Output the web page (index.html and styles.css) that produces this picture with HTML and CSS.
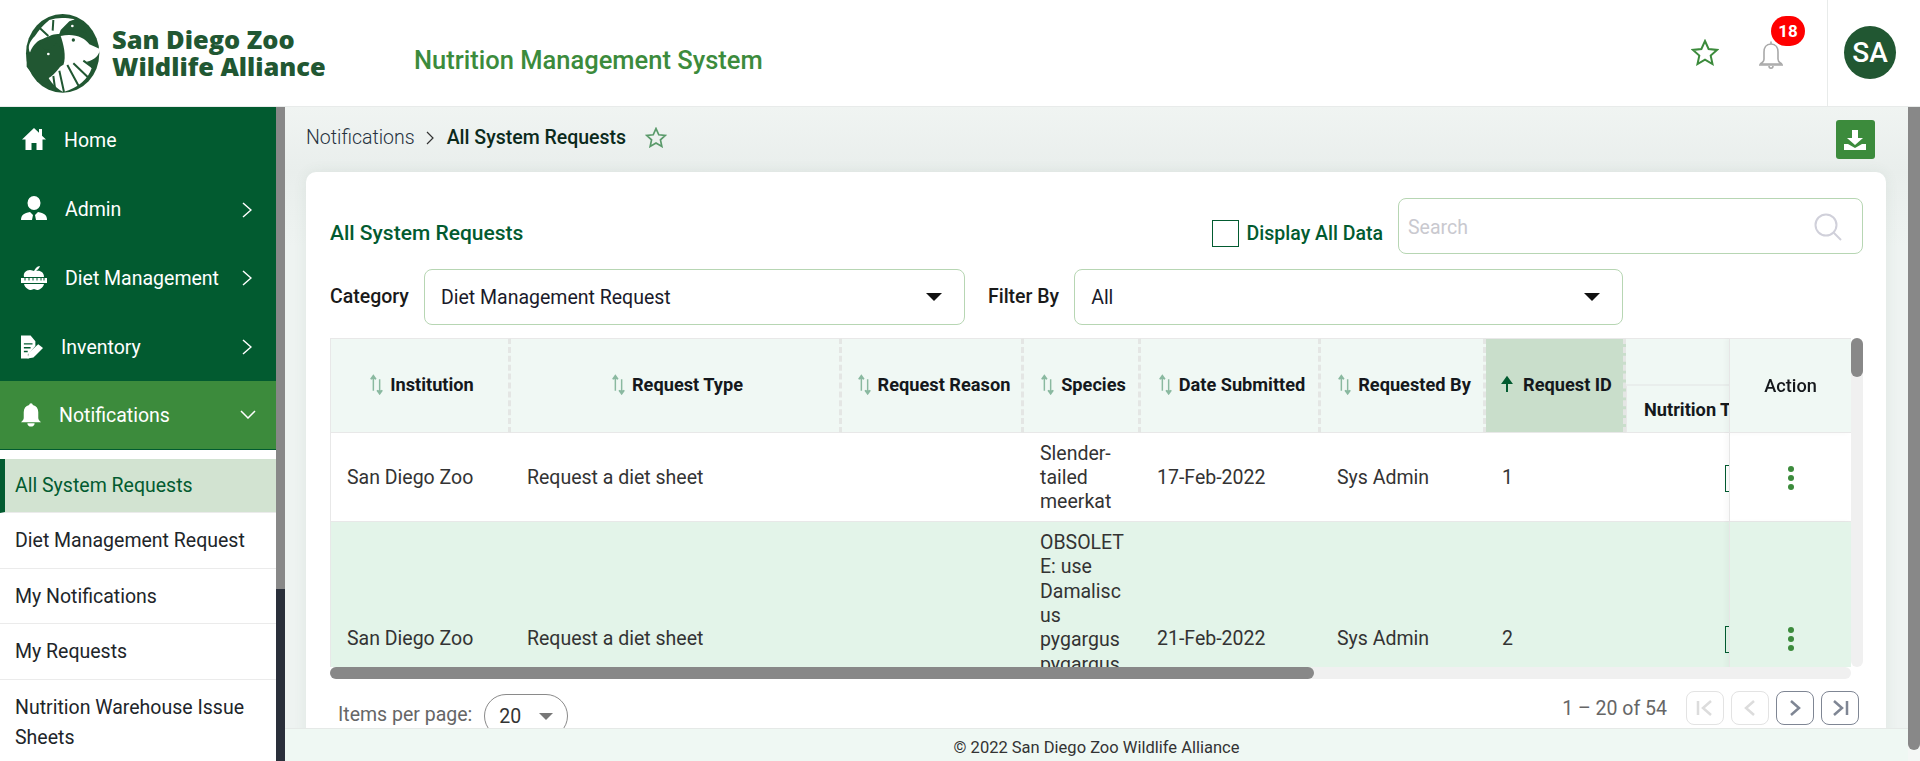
FILE: index.html
```html
<!DOCTYPE html>
<html lang="en">
<head>
<meta charset="utf-8">
<title>All System Requests</title>
<link rel="stylesheet" href="styles.css">
</head>
<body>
<header class="topbar">
  <div class="logo">
    <svg class="logo-mark" viewBox="0 0 270 258" aria-hidden="true">
      <ellipse cx="128" cy="130" rx="110" ry="118" fill="#215732"/>
      <path fill="#fff" d="M88 30C110 22 135 22 165 28 145 40 130 55 118 72 100 70 85 80 60 90 50 95 35 110 30 128 22 110 28 95 45 78 55 62 70 45 88 30Z"/>
      <path fill="#215732" d="M165 28 148 34 122 60 118 72 150 60 175 58 200 72 190 45Z"/>
      <path fill="#fff" d="M122 78C160 68 195 82 208 103L240 117C238 135 225 150 200 155L215 175C205 205 175 235 130 246 105 235 80 205 75 175L130 165C140 140 130 100 122 78Z"/>
      <path fill="#215732" d="M20 130 50 122 58 98 72 118 88 118 110 98C125 115 140 140 128 165 115 172 110 190 85 205L50 210 20 170Z"/>
      <path fill="none" stroke="#215732" stroke-width="6" d="M142 165 178 232M118 182 132 246M100 198 106 242M160 160 207 205M190 152 226 178M60 55 85 78M100 30 98 62"/>
      <circle cx="160" cy="90" r="5" fill="#215732"/>
      <circle cx="157" cy="48" r="4" fill="#fff"/>
      <circle cx="85" cy="132" r="4" fill="#fff"/>
    </svg>
    <div class="logo-text">San Diego Zoo<br>Wildlife Alliance</div>
  </div>
  <div class="app-title">Nutrition Management System</div>
  <div class="top-actions">
    <svg class="top-star" viewBox="0 0 28 27" aria-hidden="true"><path d="M14 2l3.6 8 8.4.9-6.3 5.7 1.8 8.4-7.5-4.4L6.500 25l1.800-8.400L2 10.900l8.400-.9z"/></svg>
    <div class="bell-wrap">
      <svg class="top-bell" viewBox="0 0 26 30" aria-hidden="true"><path d="M13 4V1.500M13 4C8 4 6 8 6 12v7c0 2-2 4-4 5h22c-2-1-4-3-4-5v-7c0-4-2-8-7-8z"/><path d="M1 25h24M11 26c0 3 4 3 4 0"/></svg>
      <span class="badge">18</span>
    </div>
    <div class="user-cell"><div class="avatar">SA</div></div>
  </div>
</header>

<div class="shell">
  <nav class="sidebar">
    <div class="nav-list">
      <a class="nav-item nav-home">
        <svg class="nav-icon" viewBox="0 0 26 24" aria-hidden="true"><path d="M13 1 1 12.500h3.500V23h6v-7h5v7h6V12.500H25l-4-3.800V2h-3v3.800z"/></svg>
        <span>Home</span>
      </a>
      <a class="nav-item nav-admin">
        <svg class="nav-icon" viewBox="0 0 26 24" aria-hidden="true"><ellipse cx="13" cy="7" rx="6.500" ry="7"/><path d="M0 24c0-5 3-7 9-8l3 3-1 5zM26 24c0-5-3-7-9-8l-3 3 1 5z"/></svg>
        <span>Admin</span>
        <svg class="nav-chev" viewBox="0 0 10 16" aria-hidden="true"><path d="M1 1l8 7-8 7"/></svg>
      </a>
      <a class="nav-item nav-diet">
        <svg class="nav-icon" viewBox="0 0 26 24" aria-hidden="true"><path d="M3 11c-1-4 2-7 6-7 2 0 3 1 4 1 1-2 3-5 6-5-1 3-3 4-4 5 4-1 8 1 8 6zM0 12h26v5H0zM3 18h20c-1 4-5 6-7 6-1 0-2-1-3-1s-2 1-3 1c-2 0-6-2-7-6z"/><path class="tape-ticks" d="M4 12v2.500M8 12v2.500M12 12v2.500M16 12v2.500M20 12v2.500M23 12v2.500"/></svg>
        <span>Diet Management</span>
        <svg class="nav-chev" viewBox="0 0 10 16" aria-hidden="true"><path d="M1 1l8 7-8 7"/></svg>
      </a>
      <a class="nav-item nav-inv">
        <svg class="nav-icon" viewBox="0 0 24 24" aria-hidden="true"><path d="M0 0h10l5 6v5l-8 9 1 4H0zM3 8v1.500h9V8zM3 12v1.500h7V12zM3 16v1.500h4V16z"/><path d="M18 9l5 4-10 10-6 1 1-6z"/></svg>
        <span>Inventory</span>
        <svg class="nav-chev" viewBox="0 0 10 16" aria-hidden="true"><path d="M1 1l8 7-8 7"/></svg>
      </a>
      <a class="nav-item nav-open">
        <svg class="nav-icon" viewBox="0 0 22 26" aria-hidden="true"><path d="M11 0c1 0 2 1 2 2 4 1 6 4 6 8v6c0 2 1 3 3 5H0c2-2 3-3 3-5v-6c0-4 2-7 6-8 0-1 1-2 2-2zM7 22h8c0 5-8 5-8 0z"/></svg>
        <span>Notifications</span>
        <svg class="nav-chev-down" viewBox="0 0 16 9" aria-hidden="true"><path d="M1 1l7 7 7-7"/></svg>
      </a>
      <div class="sub-list">
        <a class="sub-item sub-active">All System Requests</a>
        <a class="sub-item">Diet Management Request</a>
        <a class="sub-item">My Notifications</a>
        <a class="sub-item">My Requests</a>
        <a class="sub-item sub-wrap">Nutrition Warehouse Issue Sheets</a>
      </div>
    </div>
    <div class="rail-side"><div class="thumb-side"></div></div>
  </nav>

  <main class="main">
    <div class="main-content">
      <div class="crumbs">
        <span class="crumb-parent">Notifications</span>
        <svg class="crumb-sep" viewBox="0 0 9 14" aria-hidden="true"><path d="M1 1l6 6-6 6"/></svg>
        <span class="crumb-current">All System Requests</span>
        <svg class="crumb-star" viewBox="0 0 28 27" aria-hidden="true"><path d="M14 2l3.6 8 8.4.9-6.3 5.7 1.8 8.4-7.500-4.400L6.500 25l1.800-8.400L2 10.900l8.400-.9z"/></svg>
        <button class="download" aria-label="Download">
          <svg viewBox="0 0 22 22" aria-hidden="true"><path d="M8 1h6v8h5l-8 7-8-7h5z"/><path d="M0 15h4l7 4 7-4h4v6H0z"/></svg>
        </button>
      </div>

      <section class="card">
        <div class="card-head">
          <h1 class="card-title">All System Requests</h1>
          <label class="check"><span class="check-box"></span>Display All Data</label>
          <div class="search">
            <span class="search-ph">Search</span>
            <svg class="search-icon" viewBox="0 0 28 28" aria-hidden="true"><circle cx="12" cy="12" r="10.500"/><path d="M19.500 19.500 27 27"/></svg>
          </div>
        </div>
        <div class="filters">
          <span class="filter-label">Category</span>
          <div class="select select-cat"><span>Diet Management Request</span><i class="caret"></i></div>
          <span class="filter-label filter-second">Filter By</span>
          <div class="select select-by"><span>All</span><i class="caret"></i></div>
        </div>

        <div class="grid-wrap">
          <div class="grid-view">
            <table class="grid">
              <colgroup>
                <col class="c-inst"><col class="c-type"><col class="c-reason"><col class="c-species"><col class="c-date"><col class="c-by"><col class="c-id"><col class="c-nut"><col class="c-rest"><col class="c-action">
              </colgroup>
              <thead>
                <tr>
                  <th rowspan="2"><span class="th-in"><svg class="sort" viewBox="0 0 14 20" aria-hidden="true"><path d="M4 16V3M1.500 5 4 1.500 6.500 5M10 5v13M7.500 15.500 10 19l2.500-3.500"/></svg>Institution</span></th>
                  <th rowspan="2"><span class="th-in"><svg class="sort" viewBox="0 0 14 20" aria-hidden="true"><path d="M4 16V3M1.500 5 4 1.500 6.500 5M10 5v13M7.500 15.500 10 19l2.500-3.500"/></svg>Request Type</span></th>
                  <th rowspan="2"><span class="th-in"><svg class="sort" viewBox="0 0 14 20" aria-hidden="true"><path d="M4 16V3M1.500 5 4 1.500 6.500 5M10 5v13M7.500 15.500 10 19l2.500-3.500"/></svg>Request Reason</span></th>
                  <th rowspan="2"><span class="th-in"><svg class="sort" viewBox="0 0 14 20" aria-hidden="true"><path d="M4 16V3M1.500 5 4 1.500 6.500 5M10 5v13M7.500 15.500 10 19l2.500-3.500"/></svg>Species</span></th>
                  <th rowspan="2"><span class="th-in"><svg class="sort" viewBox="0 0 14 20" aria-hidden="true"><path d="M4 16V3M1.500 5 4 1.500 6.500 5M10 5v13M7.500 15.500 10 19l2.500-3.500"/></svg>Date Submitted</span></th>
                  <th rowspan="2"><span class="th-in"><svg class="sort" viewBox="0 0 14 20" aria-hidden="true"><path d="M4 16V3M1.500 5 4 1.500 6.500 5M10 5v13M7.500 15.500 10 19l2.500-3.500"/></svg>Requested By</span></th>
                  <th rowspan="2" class="th-sorted"><span class="th-in"><svg class="sort-on" viewBox="0 0 12 20" aria-hidden="true"><path d="M6 17V5M2 8 6 2.500 10 8z"/></svg>Request ID</span></th>
                  <th colspan="2" class="th-group"></th>
                  <th rowspan="2" class="th-action">Action</th>
                </tr>
                <tr>
                  <th class="th-sub">Nutrition Technician</th>
                  <th class="th-sub"></th>
                </tr>
              </thead>
              <tbody>
                <tr>
                  <td>San Diego Zoo</td><td>Request a diet sheet</td><td></td>
                  <td class="td-species">Slender-tailed meerkat</td>
                  <td>17-Feb-2022</td><td>Sys Admin</td><td>1</td>
                  <td class="td-box"><span class="mini-box"></span></td><td></td>
                  <td class="td-action"><span class="kebab"><i></i><i></i><i></i></span></td>
                </tr>
                <tr class="row-alt">
                  <td>San Diego Zoo</td><td>Request a diet sheet</td><td></td>
                  <td class="td-species">OBSOLETE: use Damaliscus pygargus pygargus</td>
                  <td>21-Feb-2022</td><td>Sys Admin</td><td>2</td>
                  <td class="td-box"><span class="mini-box"></span></td><td></td>
                  <td class="td-action"><span class="kebab"><i></i><i></i><i></i></span></td>
                </tr>
              </tbody>
            </table>
          </div>
          <div class="rail-v"><div class="thumb-v"></div></div>
          <div class="rail-h"><div class="thumb-h"></div></div>
        </div>

        <div class="pager">
          <div class="pager-size">
            <span class="pager-label">Items per page:</span>
            <div class="pill"><span>20</span><i class="pill-caret"></i></div>
          </div>
          <div class="pager-nav">
            <span class="pager-range">1 – 20 of 54</span>
            <button class="pg pg-off" aria-label="First page"><svg viewBox="0 0 20 16" aria-hidden="true"><path d="M3 1v14M16 1 8 8l8 7"/></svg></button>
            <button class="pg pg-off" aria-label="Previous page"><svg viewBox="0 0 20 16" aria-hidden="true"><path d="M14 1 6 8l8 7"/></svg></button>
            <button class="pg" aria-label="Next page"><svg viewBox="0 0 20 16" aria-hidden="true"><path d="M6 1l8 7-8 7"/></svg></button>
            <button class="pg" aria-label="Last page"><svg viewBox="0 0 20 16" aria-hidden="true"><path d="M4 1l8 7-8 7M17 1v14"/></svg></button>
          </div>
        </div>
      </section>
    </div>
    <div class="rail-main"><div class="thumb-main"></div></div>
  </main>

  <footer class="footer">© 2022 San Diego Zoo Wildlife Alliance</footer>
</div>
</body>
</html>
```
FILE: styles.css
```css
* { box-sizing: border-box; }
html, body { margin: 0; height: 100%; overflow: hidden; }
body {
  display: flex;
  flex-direction: column;
  font-family: Roboto, "Liberation Sans", sans-serif;
  font-size: 19.5px;
  color: #222;
  background: #fff;
}

/* top bar */
.topbar {
  flex: 0 0 107px;
  display: flex;
  align-items: stretch;
  background: #fff;
  border-bottom: 1px solid #e8ebea;
}
.logo { display: flex; align-items: flex-start; margin-left: 20px; width: 394px; }
.logo-mark { width: 90px; height: 86px; margin-top: 10px; flex: none; }
.logo-text {
  margin: 26px 0 0 2px;
  font-family: "Open Sans", sans-serif;
  font-weight: 800;
  font-size: 25.4px;
  line-height: 27px;
  color: #215732;
  white-space: nowrap;
}
.app-title { align-self: center; margin-top: 14px; font-size: 25.5px; font-weight: 500; color: #3c8b3c; white-space: nowrap; }
.top-actions { margin-left: auto; display: flex; align-items: stretch; }
.top-star { width: 28px; height: 27px; margin: 39px 39px 0 0; fill: none; stroke: #3c8b3c; stroke-width: 2; }
.bell-wrap { position: relative; width: 69px; }
.top-bell { display: block; width: 26px; height: 30px; margin-top: 40px; fill: none; stroke: #a9a9a9; stroke-width: 1.6; }
.badge {
  position: absolute;
  left: 13px;
  top: 16px;
  width: 34px;
  height: 30px;
  border-radius: 15px;
  background: #ff0000;
  color: #fff;
  font-size: 17px;
  font-weight: 700;
  line-height: 30px;
  text-align: center;
}
.user-cell { width: 93px; border-left: 1px solid #e8ebea; padding: 26px 0 0 16px; }
.avatar {
  width: 52px;
  height: 53px;
  border-radius: 50%;
  background: #215732;
  color: #fff;
  font-size: 28px;
  font-weight: 500;
  line-height: 53px;
  text-align: center;
}

/* shell */
.shell { flex: 1; min-height: 0; display: flex; position: relative; }

/* sidebar */
.sidebar { flex: 0 0 285px; display: flex; overflow: hidden; background: #fff; }
.nav-list { flex: 1; min-width: 0; overflow: hidden; }
.rail-side { flex: 0 0 9px; background: #2a2f3a; }
.thumb-side { height: 482px; background: #888; }
.nav-item {
  display: flex;
  align-items: center;
  height: 68.5px;
  padding: 0 24px 0 21px;
  background: #025b30;
  color: #fff;
  font-size: 19.5px;
}
.nav-icon { flex: none; width: 26px; height: 24px; fill: #fff; margin-right: 18px; }
.nav-home .nav-icon { margin-right: 17px; }
.nav-home span { margin-top: -1px; }
.nav-inv span { margin-top: 1px; }
.nav-open span { margin-top: 2px; }
.nav-home .nav-icon, .nav-admin .nav-icon { margin-top: -4px; }
.tape-ticks { fill: none; stroke: #025b30; stroke-width: 1; }
.nav-inv .nav-icon { width: 23px; height: 24px; margin-right: 17px; }
.nav-open {
  background: #3c8b3c;
  border-bottom: 1px solid #025b30;
}
.nav-open .nav-icon { width: 20px; height: 24px; margin-right: 18px; }
.nav-chev { margin-left: auto; width: 10px; height: 16px; fill: none; stroke: #fff; stroke-width: 1.5; }
.nav-chev-down { margin-left: auto; margin-right: -4px; width: 16px; height: 9px; fill: none; stroke: #fff; stroke-width: 1.5; }
.sub-list { padding-top: 9px; background: #fff; }
.sub-item {
  display: block;
  height: 55.5px;
  padding: 0 15px;
  line-height: 56px;
  font-size: 19.5px;
  color: #212529;
  border-bottom: 1.5px solid #ebebeb;
}
.sub-active {
  height: 54.500px;
  line-height: 54px;
  background: #d2e3d1;
  border-left: 5px solid #025b30;
  border-bottom: 1px solid #ebebeb;
  padding-left: 10px;
  color: #025b30;
}
.sub-wrap { height: 84px; padding-top: 13px; line-height: 30px; border-bottom: 0; }

/* main */
.main { flex: 1; min-width: 0; display: flex; overflow: hidden; }
.main-content {
  flex: 1;
  min-width: 0;
  overflow: hidden;
  background: linear-gradient(#f0f4f2, #e9eeec 65px, #eef3f1 140px);
}
.rail-main { flex: 0 0 12px; background: #f4f7f5; }
.thumb-main { height: 643px; background: #888; border-radius: 0 0 6px 6px; }
.crumbs {
  height: 65px;
  display: flex;
  align-items: center;
  padding: 0 33px 5px 21px;
}
.crumb-parent { font-weight: 300; color: #26323e; }
.crumb-sep { width: 9px; height: 14px; margin: 2px 12px 0 11px; fill: none; stroke: #333; stroke-width: 1.2; }
.crumb-current { font-weight: 500; color: #0b2a1c; }
.crumb-star { width: 22px; height: 21px; margin-left: 19px; fill: none; stroke: #5a9a6a; stroke-width: 2.2; }
.download {
  margin: 5px 0 0 auto;
  width: 39px;
  height: 39px;
  padding: 9px 8px;
  border: 0;
  border-radius: 3px;
  background: #3c8b3c;
}
.download svg { display: block; width: 22px; height: 22px; fill: #fff; }

.card {
  margin: 0 22px 0 21px;
  padding: 26px 23px 0 24px;
  height: 600px;
  border-radius: 10px 10px 0 0;
  background: #fff;
  box-shadow: 0 0 14px rgba(60, 100, 80, .08);
}
.card-head { display: flex; align-items: center; height: 56px; }
.card-title { margin: 14px auto 0 0; font-size: 21px; font-weight: 500; color: #025b30; }
.check { display: flex; align-items: center; margin: 14px 15px 0 0; font-weight: 500; color: #025b30; }
.check-box { width: 27px; height: 27px; margin-right: 8px; border: 1px solid #025b30; }
.search {
  width: 465px;
  height: 56px;
  padding: 0 9px;
  display: flex;
  align-items: center;
  border: 1px solid #b7d6b3;
  border-radius: 8px;
}
.search-ph { color: #c9c9cf; margin-top: 2px; }
.search-icon { margin: 2px 11px 0 auto; width: 28px; height: 28px; fill: none; stroke: #d0d0da; stroke-width: 2; }
.filters { display: flex; align-items: center; margin-top: 15px; }
.filter-label { font-weight: 500; color: #1a1a1a; margin-top: -2px; }
.filter-second { margin-left: 23px; }
.select {
  display: flex;
  align-items: center;
  height: 56px;
  padding: 0 22px 0 16px;
  border: 1px solid #b7d6b3;
  border-radius: 8px;
  color: #1a1a2a;
}
.select-cat { width: 541px; margin-left: 15px; }
.select-by { width: 549px; margin-left: 15px; }
.caret {
  margin-left: auto;
  width: 0;
  height: 0;
  border-left: 8px solid transparent;
  border-right: 8px solid transparent;
  border-top: 8px solid #111;
}

/* table */
.grid-wrap {
  margin-top: 13px;
  height: 341px;
  display: grid;
  grid-template-columns: 1521px 12px;
  grid-template-rows: 329px 12px;
}
.grid-view { overflow: hidden; }
.rail-v { background: #f0f0f0; border-radius: 6px; }
.thumb-v { height: 39px; background: #888; border-radius: 6px; }
.rail-h { background: #f0f0f0; border-radius: 6px; }
.thumb-h { width: 984px; height: 12px; background: #888; border-radius: 6px; }
.grid {
  table-layout: fixed;
  width: 2351px;
  border-collapse: separate;
  border-spacing: 0;
}
.c-inst { width: 181px; }
.c-type { width: 331px; }
.c-reason { width: 182px; }
.c-species { width: 117px; }
.c-date { width: 180px; }
.c-by { width: 165px; }
.c-id { width: 140px; }
.c-nut { width: 220px; }
.c-rest { width: 713px; }
.c-action { width: 122px; }
.grid th {
  height: 47.500px;
  padding: 0;
  background: #f0f8f4;
  font-size: 18.2px;
  font-weight: 700;
  color: #15181c;
  text-align: center;
  vertical-align: middle;
  border-top: 1px solid #e8e8e8;
  border-right: 3px dashed #e4e6e4;
  border-bottom: 1.500px solid #e8e8e8;
}
.grid th:first-child, .grid td:first-child { border-left: 1px solid #e8e8e8; }
.th-in { display: inline-flex; align-items: center; white-space: nowrap; margin: 2px 0 0 4px; }
.sort { width: 15px; height: 21px; margin-right: 6px; fill: #8ab9a0; stroke: #8ab9a0; stroke-width: 1.400; }
.sort-on { width: 12px; height: 20px; margin-right: 10px; fill: #025b30; stroke: #025b30; stroke-width: 2; }
.grid .th-sorted { background: #c9decb; }
.grid .th-group { height: 48px; border-bottom: 2px solid #e9eeec; border-right: 0; }
.grid .th-sub { height: 47px; border-top: 0; border-right: 0; text-align: left; padding-left: 17px; white-space: nowrap; overflow: hidden; }
.grid .th-action {
  position: sticky;
  right: 0;
  border-right: 0;
  border-left: 1px solid #e6e6e6;
  font-weight: 500;
  box-shadow: -3px 0 5px rgba(0, 0, 0, .03);
  z-index: 2;
}
.grid td {
  padding: 8.500px 16px 6.500px;
  font-size: 19.5px;
  line-height: 24.4px;
  color: #333;
  background: #fff;
  border-bottom: 1px solid #e8e8e8;
  overflow-wrap: anywhere;
}
.grid .row-alt td { background: #e3f4e9; height: 233px; }
.grid .row-alt .td-species { vertical-align: top; }
.grid .td-box { padding-left: 98px; }
.mini-box { display: block; width: 27px; height: 27px; border: 1px solid #025b30; margin-left: 1px; }
.grid .td-action {
  position: sticky;
  right: 0;
  padding: 0;
  text-align: center;
  border-left: 1px solid #e6e6e6;
  box-shadow: -3px 0 5px rgba(0, 0, 0, .03);
  z-index: 1;
}
.kebab { display: inline-flex; flex-direction: column; gap: 3px; vertical-align: middle; }
.kebab i { display: block; width: 6px; height: 6px; border-radius: 50%; background: #3c8b3c; }

/* pager */
.pager { display: flex; justify-content: space-between; align-items: flex-start; padding: 12px 4px 0 8px; }
.pager-size { display: flex; align-items: flex-start; padding-top: 3px; }
.pager-label { color: #666; line-height: 42px; margin-right: 12px; }
.pill {
  width: 84px;
  height: 44px;
  padding: 0 14px;
  display: flex;
  align-items: center;
  justify-content: space-between;
  border: 1px solid #8a8a8a;
  border-radius: 22px;
  color: #333;
}
.pill-caret {
  width: 0;
  height: 0;
  border-left: 7px solid transparent;
  border-right: 7px solid transparent;
  border-top: 7px solid #777;
}
.pager-nav { display: flex; align-items: flex-start; gap: 7px; }
.pager-range { color: #666; line-height: 36px; margin-right: 12px; }
.pg {
  width: 38px;
  height: 34px;
  padding: 0;
  display: flex;
  align-items: center;
  justify-content: center;
  background: #fff;
  border: 1.500px solid #7f8694;
  border-radius: 8px;
}
.pg svg { width: 20px; height: 16px; fill: none; stroke: #7f8694; stroke-width: 2.500; }
.pg-off { border-color: #e3e3e3; }
.pg-off svg { stroke: #dcdcdc; }

/* footer */
.footer {
  position: absolute;
  left: 285px;
  right: 12px;
  bottom: 0;
  height: 33px;
  padding-top: 5px;
  background: #eff8f3;
  border-top: 1px solid #e5e9e7;
  font-size: 16.5px;
  line-height: 28px;
  color: #333;
  text-align: center;
}
```
